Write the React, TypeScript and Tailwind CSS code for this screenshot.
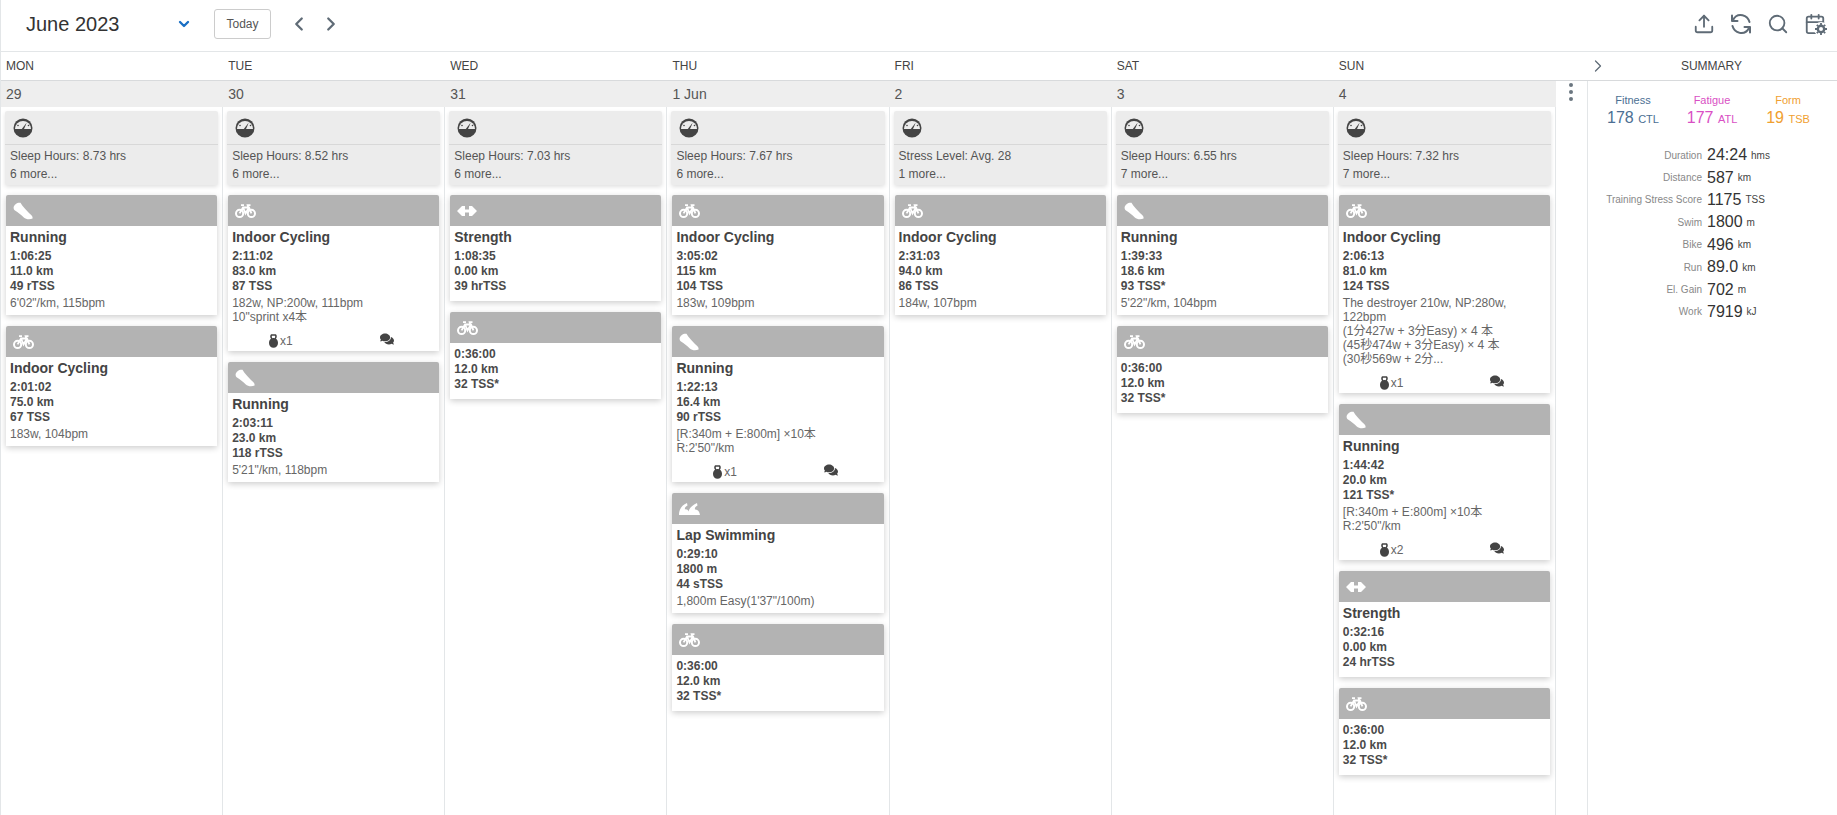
import { Calendar, ChevronDown, ChevronLeft, ChevronRight, Search, Upload } from 'lucide-react';
import { FaComments } from 'react-icons/fa';

type Sport = 'run' | 'bike' | 'strength' | 'swim';

interface Workout {
  sport: Sport;
  title?: string;
  lines: string[];
  desc?: string[];
  medal?: string;
}

interface Day {
  weekday: string;
  date: string;
  metric: string;
  more: string;
  workouts: Workout[];
}

const trainer: Workout = { sport: 'bike', lines: ['0:36:00', '12.0 km', '32 TSS*'] };

const days: Day[] = [
  {
    weekday: 'MON',
    date: '29',
    metric: 'Sleep Hours: 8.73 hrs',
    more: '6 more...',
    workouts: [
      { sport: 'run', title: 'Running', lines: ['1:06:25', '11.0 km', '49 rTSS'], desc: ['6\'02"/km, 115bpm'] },
      { sport: 'bike', title: 'Indoor Cycling', lines: ['2:01:02', '75.0 km', '67 TSS'], desc: ['183w, 104bpm'] },
    ],
  },
  {
    weekday: 'TUE',
    date: '30',
    metric: 'Sleep Hours: 8.52 hrs',
    more: '6 more...',
    workouts: [
      {
        sport: 'bike',
        title: 'Indoor Cycling',
        lines: ['2:11:02', '83.0 km', '87 TSS'],
        desc: ['182w, NP:200w, 111bpm', '10"sprint x4本'],
        medal: 'x1',
      },
      { sport: 'run', title: 'Running', lines: ['2:03:11', '23.0 km', '118 rTSS'], desc: ['5\'21"/km, 118bpm'] },
    ],
  },
  {
    weekday: 'WED',
    date: '31',
    metric: 'Sleep Hours: 7.03 hrs',
    more: '6 more...',
    workouts: [{ sport: 'strength', title: 'Strength', lines: ['1:08:35', '0.00 km', '39 hrTSS'] }, trainer],
  },
  {
    weekday: 'THU',
    date: '1 Jun',
    metric: 'Sleep Hours: 7.67 hrs',
    more: '6 more...',
    workouts: [
      { sport: 'bike', title: 'Indoor Cycling', lines: ['3:05:02', '115 km', '104 TSS'], desc: ['183w, 109bpm'] },
      {
        sport: 'run',
        title: 'Running',
        lines: ['1:22:13', '16.4 km', '90 rTSS'],
        desc: ['[R:340m + E:800m] ×10本', 'R:2\'50"/km'],
        medal: 'x1',
      },
      { sport: 'swim', title: 'Lap Swimming', lines: ['0:29:10', '1800 m', '44 sTSS'], desc: ['1,800m Easy(1\'37"/100m)'] },
      trainer,
    ],
  },
  {
    weekday: 'FRI',
    date: '2',
    metric: 'Stress Level: Avg. 28',
    more: '1 more...',
    workouts: [{ sport: 'bike', title: 'Indoor Cycling', lines: ['2:31:03', '94.0 km', '86 TSS'], desc: ['184w, 107bpm'] }],
  },
  {
    weekday: 'SAT',
    date: '3',
    metric: 'Sleep Hours: 6.55 hrs',
    more: '7 more...',
    workouts: [
      { sport: 'run', title: 'Running', lines: ['1:39:33', '18.6 km', '93 TSS*'], desc: ['5\'22"/km, 104bpm'] },
      trainer,
    ],
  },
  {
    weekday: 'SUN',
    date: '4',
    metric: 'Sleep Hours: 7.32 hrs',
    more: '7 more...',
    workouts: [
      {
        sport: 'bike',
        title: 'Indoor Cycling',
        lines: ['2:06:13', '81.0 km', '124 TSS'],
        desc: ['The destroyer 210w, NP:280w,', '122bpm', '(1分427w + 3分Easy) × 4 本', '(45秒474w + 3分Easy) × 4 本', '(30秒569w + 2分...'],
        medal: 'x1',
      },
      {
        sport: 'run',
        title: 'Running',
        lines: ['1:44:42', '20.0 km', '121 TSS*'],
        desc: ['[R:340m + E:800m] ×10本', 'R:2\'50"/km'],
        medal: 'x2',
      },
      { sport: 'strength', title: 'Strength', lines: ['0:32:16', '0.00 km', '24 hrTSS'] },
      trainer,
    ],
  },
];

const totals = [
  ['Duration', '24:24', 'hms'],
  ['Distance', '587', 'km'],
  ['Training Stress Score', '1175', 'TSS'],
  ['Swim', '1800', 'm'],
  ['Bike', '496', 'km'],
  ['Run', '89.0', 'km'],
  ['El. Gain', '702', 'm'],
  ['Work', '7919', 'kJ'],
];

const ShoeIcon = () => (
  <svg width="20" height="18" viewBox="0 0 20 18" fill="white">
    <path d="M0.6 5.5 C1 2.5 4.5 0.2 7.5 0.8 C8.8 3 10 4.6 11.8 6.4 C13.6 8.4 15.6 10.6 17.4 12.2 C18.8 13.4 19.8 14.6 19.6 16.4 C17 17.8 12.8 17.4 10.8 15.4 C8.2 12.8 5 10.8 2 8.6 C1 7.8 0.5 6.6 0.6 5.5 Z" />
  </svg>
);

const BikeIcon = () => (
  <svg width="21" height="14" viewBox="0 0 21 14" fill="none" stroke="white">
    <circle cx="4.6" cy="9.4" r="3.6" strokeWidth="2" />
    <circle cx="16.4" cy="9.4" r="3.6" strokeWidth="2" />
    <path d="M4.6 9.4 L8 3.5 H14 L16.4 9.4 M8 3.5 L10.5 9.4 L14 3.5" strokeWidth="1.8" />
    <path d="M6 1.2 H9 M13.2 3.5 L12.6 1.2 H15.5" strokeWidth="1.8" />
  </svg>
);

const DumbbellIcon = () => (
  <svg width="20" height="14" viewBox="0 0 20 14" fill="white">
    <path d="M0 7 L5 2 L8 2 L8 5.5 L12 5.5 L12 2 L15 2 L20 7 L15 12 L12 12 L12 8.5 L8 8.5 L8 12 L5 12 Z" />
  </svg>
);

const SwimIcon = () => (
  <svg width="21" height="12" viewBox="0 0 21 12" fill="white">
    <path d="M0 12 C0 6 3 2 8 0 L8.5 2.5 C6.5 3.5 5.5 5 6 6.5 C7.5 6 9 7 9.5 8.5 C10 6 13 2 18 0 L18.5 2.5 C16.5 3.5 15.5 5 16 6.5 C18.5 6 20.5 8.5 21 12 Z" />
  </svg>
);

const GaugeIcon = () => (
  <svg width="20" height="20" viewBox="0 0 20 20">
    <circle cx="10" cy="10" r="9.5" fill="#444" />
    <path d="M2 11 A8 8 0 0 1 18 11 Z" fill="#ececec" />
    <path d="M8.8 11 L13.8 4.6 L11 11 Z" fill="#444" />
    <circle cx="5" cy="7.5" r="0.8" fill="#444" />
    <circle cx="15.5" cy="7.5" r="0.8" fill="#444" />
  </svg>
);

const KettlebellIcon = () => (
  <svg width="9" height="14" viewBox="0 0 9 14" fill="#444">
    <path fillRule="evenodd" d="M2.2 0.2 H6.8 C8 1 8.2 3 7 4.8 C8.3 5.8 9 7.2 9 9 C9 11.8 7 13.8 4.5 13.8 C2 13.8 0 11.8 0 9 C0 7.2 0.7 5.8 2 4.8 C0.8 3 1 1 2.2 0.2 Z M3 1.8 C2.6 2.6 2.8 3.4 3.3 4.2 C4 4 5 4 5.7 4.2 C6.2 3.4 6.4 2.6 6 1.8 Z" />
  </svg>
);

const RefreshIcon = () => (
  <svg width="22" height="22" viewBox="0 0 22 22" fill="none" stroke="#5f6b76" strokeWidth="2" strokeLinecap="round" strokeLinejoin="round">
    <path d="M3 7 C5 3 9 1.5 12.5 2.2 C16 3 18.5 5.5 19.5 9" />
    <path d="M2 2.5 V8 H7.5" />
    <path d="M19 15 C17 19 13 20.5 9.5 19.8 C6 19 3.5 16.5 2.5 13" />
    <path d="M20 19.5 V14 H14.5" />
  </svg>
);

const CalendarSettingsIcon = () => (
  <span className="relative block w-[22px] h-[22px]">
    <Calendar size={22} color="#5f6b76" strokeWidth={2} />
    <svg className="absolute right-[-2px] bottom-[-1px]" width="14" height="14" viewBox="0 0 14 14">
      <circle cx="7" cy="7" r="7" fill="white" />
      <circle cx="7" cy="7" r="3.2" fill="none" stroke="#5f6b76" strokeWidth="2.4" />
      <path d="M7 1 V3 M7 11 V13 M1 7 H3 M11 7 H13 M2.8 2.8 L4.2 4.2 M9.8 9.8 L11.2 11.2 M2.8 11.2 L4.2 9.8 M9.8 4.2 L11.2 2.8" stroke="#5f6b76" strokeWidth="1.8" />
    </svg>
  </span>
);

const SportIcon = ({ sport }: { sport: Sport }) => {
  if (sport === 'run') return <ShoeIcon />;
  if (sport === 'bike') return <BikeIcon />;
  if (sport === 'strength') return <DumbbellIcon />;
  return <SwimIcon />;
};

const WorkoutCard = ({ workout }: { workout: Workout }) => (
  <div className="mx-px bg-white rounded-t-[2px] shadow-[0_2px_6px_rgba(0,0,0,0.2)]">
    <div className="h-[31px] bg-[#b3b3b3] rounded-t-[2px] pl-[7px] flex items-center">
      <SportIcon sport={workout.sport} />
    </div>
    <div
      className={`px-[4px] ${workout.title ? 'pt-[3px]' : 'pt-[4px]'} ${
        workout.medal ? 'pb-0' : workout.desc ? 'pb-[5px]' : 'pb-[7px]'
      }`}
    >
      {workout.title && <div className="text-[14px] leading-[17px] font-bold text-[#444] mb-[3px]">{workout.title}</div>}
      {workout.lines.map((line) => (
        <div key={line} className="text-[12px] leading-[15px] font-bold text-[#4a4a4a]">
          {line}
        </div>
      ))}
      {workout.desc && (
        <div className="mt-[2px] text-[12px] leading-[14px] text-[#666]">
          {workout.desc.map((line) => (
            <div key={line}>{line}</div>
          ))}
        </div>
      )}
      {workout.medal && (
        <div className="mt-[8px] h-[19px] pb-[2px] flex items-center text-[12px] text-[#666]">
          <div className="flex-1 flex justify-center items-center gap-[2px] pr-[4px]">
            <KettlebellIcon />
            <span>{workout.medal}</span>
          </div>
          <div className="flex-1 flex justify-center pl-[4px] pb-[3px]">
            <FaComments size={14} color="#444" />
          </div>
        </div>
      )}
    </div>
  </div>
);

const DayColumn = ({ day }: { day: Day }) => (
  <div className="border-r border-[#e3e6e8] px-[4px] pt-[4px] flex flex-col gap-[11px]">
    <div className="h-[74px] bg-[#ececec] rounded-[2px] shadow-[0_2px_4px_rgba(0,0,0,0.12)] text-[12px] text-[#555] mb-[-1px]">
      <div className="h-[34px] border-b border-[#d8d8d8] pl-[8px] flex items-center">
        <GaugeIcon />
      </div>
      <div className="pl-[5px] pt-[2px] leading-[18px]">
        <div>{day.metric}</div>
        <div>{day.more}</div>
      </div>
    </div>
    {day.workouts.map((workout, i) => (
      <WorkoutCard key={i} workout={workout} />
    ))}
  </div>
);

export default function App() {
  return (
    <div className="h-[815px] overflow-hidden bg-white border-l border-[#e3e6e8] flex flex-col font-['Liberation_Sans','Noto_Sans_CJK_JP',sans-serif]">
      {/* Toolbar */}
      <div className="h-[52px] shrink-0 border-b border-[#e3e6e8] flex items-center pb-[4px] pl-[25px] pr-[11px]">
        <div className="w-[150px] text-[20px] text-[#333]">June 2023</div>
        <ChevronDown size={16} color="#1a6fc4" strokeWidth={3.5} />
        <button className="ml-[22px] w-[57px] h-[30px] border border-[#ccc] rounded-[3px] text-[12px] text-[#555]">Today</button>
        <ChevronLeft className="ml-[17px]" size={22} color="#5f6b76" strokeWidth={2.5} />
        <ChevronRight className="ml-[10px]" size={22} color="#5f6b76" strokeWidth={2.5} />
        <div className="ml-auto flex items-center gap-[15px]">
          <Upload size={22} color="#5f6b76" strokeWidth={2} />
          <RefreshIcon />
          <Search size={22} color="#5f6b76" strokeWidth={2} />
          <CalendarSettingsIcon />
        </div>
      </div>

      {/* Weekday header */}
      <div className="h-[29px] shrink-0 border-b border-[#d8dadc] flex items-center text-[12px] text-[#444]">
        <div className="w-[1555px] shrink-0 grid grid-cols-7">
          {days.map((day) => (
            <div key={day.weekday} className="pl-[5px]">
              {day.weekday}
            </div>
          ))}
        </div>
        <ChevronRight className="ml-[32px]" size={20} color="#5f6b76" strokeWidth={1.5} />
        <div className="flex-1 text-center pr-[22px] text-[#444]">SUMMARY</div>
      </div>

      <div className="flex-1 flex min-h-0">
        {/* Calendar */}
        <div className="w-[1555px] shrink-0 flex flex-col">
          <div className="h-[26px] shrink-0 bg-[#eee] grid grid-cols-7 items-center text-[14px] text-[#555]">
            {days.map((day) => (
              <div key={day.weekday} className="pl-[5px]">
                {day.date}
              </div>
            ))}
          </div>
          <div className="flex-1 grid grid-cols-7">
            {days.map((day) => (
              <DayColumn key={day.weekday} day={day} />
            ))}
          </div>
        </div>

        {/* Kebab */}
        <div className="w-[31px] shrink-0 flex flex-col items-center gap-[3px] pt-[2px] pr-[2px]">
          <span className="w-[4px] h-[4px] rounded-full bg-[#6b7680]" />
          <span className="w-[4px] h-[4px] rounded-full bg-[#6b7680]" />
          <span className="w-[4px] h-[4px] rounded-full bg-[#6b7680]" />
        </div>

        {/* Summary */}
        <div className="flex-1 border-l border-[#e3e6e8]">
          <div className="grid grid-cols-[90px_68px_84px] justify-start pt-[12px] text-center whitespace-nowrap">
            <div className="text-[#4c6f93]">
              <div className="text-[11px] leading-[15px]">Fitness</div>
              <div className="text-[16px] leading-[19px]">
                178 <span className="text-[11px]">CTL</span>
              </div>
            </div>
            <div className="text-[#d94fc4]">
              <div className="text-[11px] leading-[15px]">Fatigue</div>
              <div className="text-[16px] leading-[19px]">
                177 <span className="text-[11px]">ATL</span>
              </div>
            </div>
            <div className="text-[#f0a030]">
              <div className="text-[11px] leading-[15px]">Form</div>
              <div className="text-[16px] leading-[19px]">
                19 <span className="text-[11px]">TSB</span>
              </div>
            </div>
          </div>
          <div className="mt-[15px] grid grid-cols-[114px_1fr] gap-x-[5px]">
            {totals.map(([label, value, unit]) => (
              <div key={label} className="contents">
                <div className="h-[22.4px] flex items-center justify-end text-[10px] text-[#888] whitespace-nowrap">{label}</div>
                <div className="h-[22.4px] flex items-center gap-[4px] text-[16px] text-[#333]">
                  {value} <span className="text-[10px] text-[#444]">{unit}</span>
                </div>
              </div>
            ))}
          </div>
        </div>
      </div>
    </div>
  );
}
